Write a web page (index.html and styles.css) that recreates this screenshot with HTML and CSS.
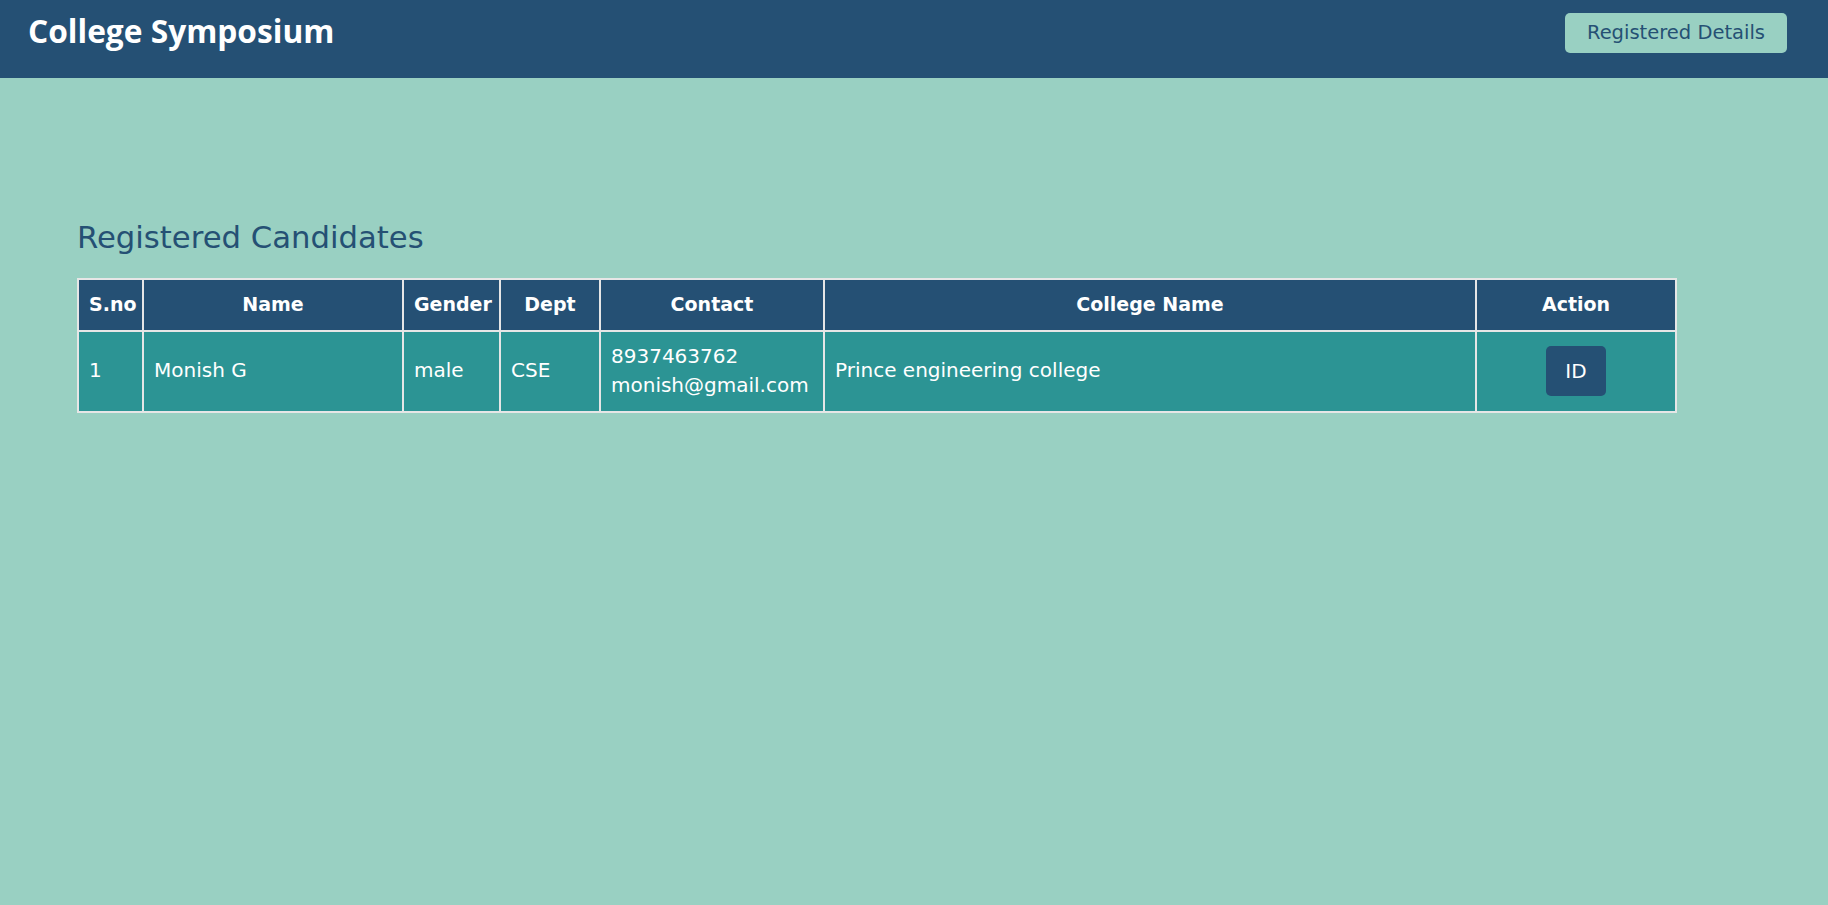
FILE: index.html
```html
<!DOCTYPE html>
<html lang="en">
<head>
<meta charset="utf-8">
<title>College Symposium</title>
<link rel="stylesheet" href="styles.css">
</head>
<body>
<header class="topbar">
  <h1 class="brand">College Symposium</h1>
  <button class="nav-btn">Registered Details</button>
</header>
<main class="content">
  <h2 class="section-title">Registered Candidates</h2>
  <table class="candidates">
    <thead>
      <tr>
        <th class="c-sno">S.no</th>
        <th class="c-name">Name</th>
        <th class="c-gender">Gender</th>
        <th class="c-dept">Dept</th>
        <th class="c-contact">Contact</th>
        <th class="c-college">College Name</th>
        <th class="c-action">Action</th>
      </tr>
    </thead>
    <tbody>
      <tr>
        <td>1</td>
        <td>Monish G</td>
        <td>male</td>
        <td>CSE</td>
        <td>8937463762<br>monish@gmail.com</td>
        <td>Prince engineering college</td>
        <td class="action-cell"><button class="id-btn">ID</button></td>
      </tr>
    </tbody>
  </table>
</main>
</body>
</html>
```

FILE: styles.css
```css
* {
  box-sizing: border-box;
}

html, body {
  margin: 0;
  padding: 0;
}

body {
  background: #99d0c2;
  font-family: "DejaVu Sans", "Open Sans", sans-serif;
  color: #ffffff;
  min-height: 905px;
}

.topbar {
  background: #255074;
  height: 78px;
  padding: 13px 41px 0 28px;
  display: flex;
  align-items: flex-start;
  justify-content: space-between;
}

.brand {
  margin: 0;
  font-family: "Open Sans", sans-serif;
  font-weight: 700;
  font-size: 31.7px;
  line-height: 36px;
  color: #ffffff;
}

.nav-btn {
  height: 40px;
  padding: 0 22px;
  border: none;
  border-radius: 5px;
  background: #99d0c2;
  color: #255074;
  font-family: "DejaVu Sans", sans-serif;
  font-size: 19.5px;
  line-height: 40px;
}

.content {
  padding: 137px 0 0 77px;
}

.section-title {
  margin: 0 0 18px 0;
  font-weight: 400;
  font-size: 30.7px;
  line-height: 45px;
  color: #255074;
}

.candidates {
  width: 1600px;
  table-layout: fixed;
  border-collapse: separate;
  border-spacing: 0;
  border-left: 2px solid #e6e6e6;
  border-top: 2px solid #e6e6e6;
}

.candidates th,
.candidates td {
  border-right: 2px solid #e6e6e6;
  border-bottom: 2px solid #e6e6e6;
  padding: 10px;
  line-height: 29.5px;
  vertical-align: middle;
}

.candidates th {
  background: #255074;
  font-weight: 700;
  font-size: 19px;
  text-align: center;
  white-space: nowrap;
}

.candidates td {
  background: #2c9494;
  font-size: 20px;
  text-align: left;
}

.c-sno { width: 65px; }
.c-name { width: 260px; }
.c-gender { width: 97px; }
.c-dept { width: 100px; }
.c-contact { width: 224px; }
.c-college { width: 652px; }
.c-action { width: 200px; }

.candidates td.action-cell {
  text-align: center;
}

.id-btn {
  width: 60px;
  height: 50px;
  border: none;
  border-radius: 5px;
  background: #255074;
  color: #ffffff;
  font-family: "DejaVu Sans", sans-serif;
  font-size: 20px;
  vertical-align: middle;
}
```
